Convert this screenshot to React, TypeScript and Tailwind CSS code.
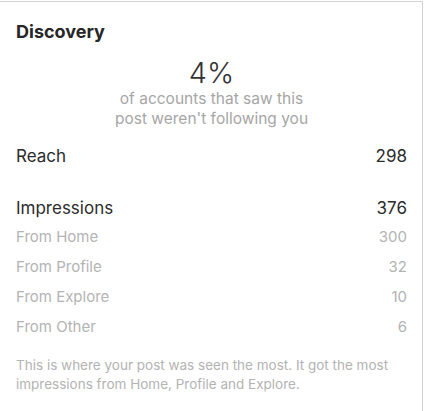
const sources = [
  { label: "From Home", value: 300 },
  { label: "From Profile", value: 32 },
  { label: "From Explore", value: 10 },
  { label: "From Other", value: 6 },
];

export default function App() {
  return (
    <div className="h-[411px] w-[427px] bg-white pt-[1px] font-['Inter',sans-serif]">
      <div className="h-[410px] w-[423px] border-t border-r border-[#d4d4d4] bg-white px-4 pr-[15px]">
        <h2 className="pt-[18px] text-[18px] font-bold leading-[24px] text-[#262626]">
          Discovery
        </h2>

        <div className="mt-[11px] flex flex-col items-center text-center">
          <div className="text-[29px] font-light leading-[36px] text-[#333]">4%</div>
          <p className="-mt-[2px] text-[15.5px] leading-[20px] text-[#a6a6a6]">
            of accounts that saw this
            <br />
            post weren't following you
          </p>
        </div>

        <div className="mt-[16px] flex items-center justify-between text-[17px] leading-[22px] text-[#2b2b2b]">
          <span>Reach</span>
          <span>298</span>
        </div>

        <div className="mt-[30px] flex items-center justify-between text-[17px] leading-[22px] text-[#2b2b2b]">
          <span>Impressions</span>
          <span>376</span>
        </div>

        <ul className="mt-[7px] flex flex-col gap-[8px]">
          {sources.map((s) => (
            <li
              key={s.label}
              className="flex items-center justify-between text-[15px] leading-[22px] text-[#b3b3b3]"
            >
              <span>{s.label}</span>
              <span>{s.value}</span>
            </li>
          ))}
        </ul>

        <p className="mt-[18px] text-[13.5px] leading-[19px] text-[#b3b3b3]">
          This is where your post was seen the most. It got the most
          impressions from Home, Profile and Explore.
        </p>
      </div>
    </div>
  );
}
